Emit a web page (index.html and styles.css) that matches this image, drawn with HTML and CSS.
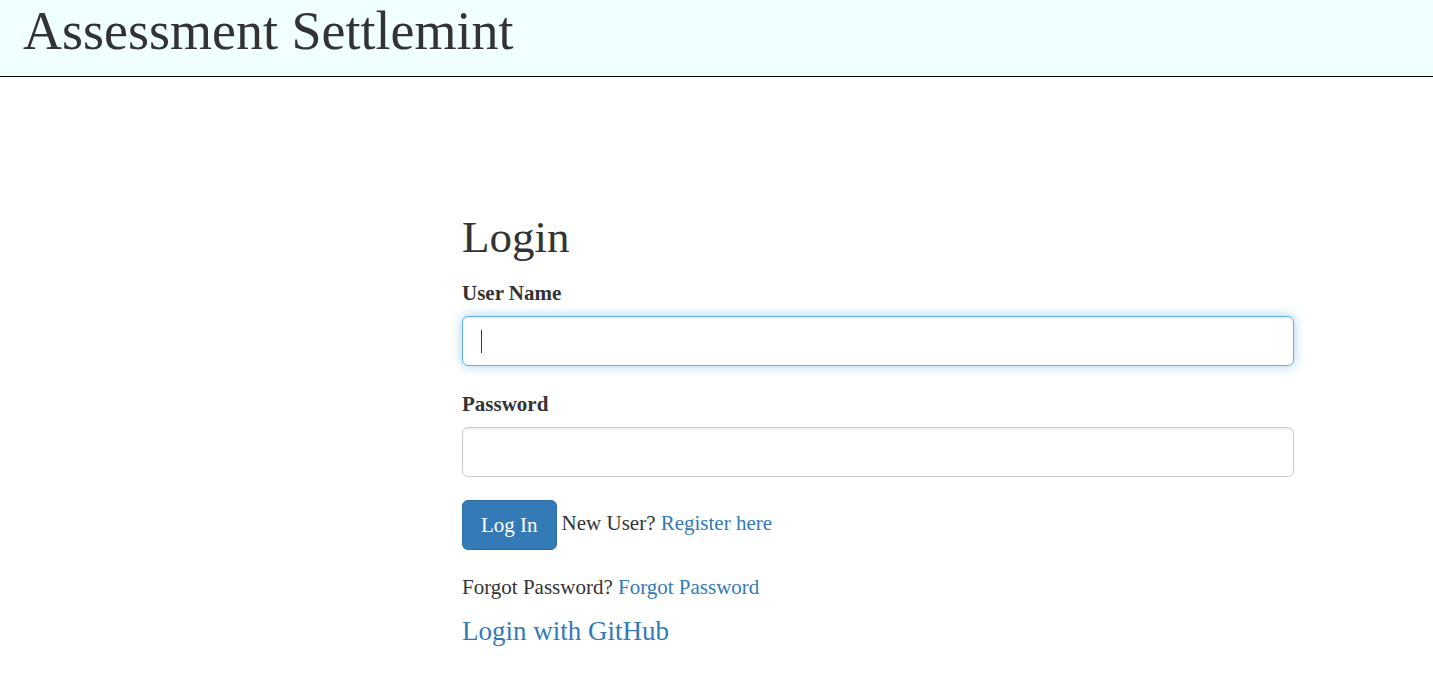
FILE: index.html
```html
<!DOCTYPE html>
<html lang="en">
<head>
<meta charset="utf-8">
<title>Assessment Settlemint</title>
<link rel="stylesheet" href="styles.css">
</head>
<body>
<header class="topbar">
  <h1 class="brand">Assessment Settlemint</h1>
</header>
<main class="page">
  <form class="login-form">
    <h2 class="login-title">Login</h2>
    <div class="form-group">
      <label class="field-label" for="username">User Name</label>
      <div class="input-wrap">
        <input class="field-input is-focused" id="username" type="text">
        <span class="caret"></span>
      </div>
    </div>
    <div class="form-group">
      <label class="field-label" for="password">Password</label>
      <div class="input-wrap">
        <input class="field-input" id="password" type="password">
      </div>
    </div>
    <div class="action-row">
      <button class="btn-primary" type="button">Log In</button>
      <span class="inline-text">New User? <a class="link" href="#">Register here</a></span>
    </div>
    <p class="forgot">Forgot Password? <a class="link" href="#">Forgot Password</a></p>
    <p class="github"><a class="link" href="#">Login with GitHub</a></p>
  </form>
</main>
</body>
</html>
```

FILE: styles.css
```css
* {
  box-sizing: border-box;
}

html, body {
  margin: 0;
  padding: 0;
  background: #fff;
}

body {
  font-family: "Liberation Serif", "Times New Roman", serif;
  font-size: 21px;
  line-height: 30px;
  color: #333;
}

.topbar {
  height: 77px;
  background: #f0ffff;
  border-bottom: 1px solid #000;
  padding: 2px 0 0 23px;
}

.brand {
  margin: 0;
  font-weight: normal;
  font-size: 54px;
  line-height: 59px;
  color: #333;
}

.page {
  padding: 135px 0 0 462px;
}

.login-form {
  width: 832px;
}

.login-title {
  margin: 0 0 16px 0;
  font-weight: normal;
  font-size: 45px;
  line-height: 50px;
  color: #333;
}

.form-group {
  margin-bottom: 23px;
}

.field-label {
  display: block;
  font-weight: bold;
  font-size: 21px;
  line-height: 30px;
  margin-bottom: 8px;
  color: #333;
}

.input-wrap {
  position: relative;
}

.field-input {
  display: block;
  width: 100%;
  height: 50px;
  padding: 9px 18px;
  font-family: inherit;
  font-size: 21px;
  color: #555;
  background: #fff;
  border: 1px solid #ccc;
  border-radius: 6px;
  box-shadow: inset 0 1.5px 1.5px rgba(0, 0, 0, 0.075);
  outline: none;
}

.field-input.is-focused {
  border-color: #66afe9;
  box-shadow: inset 0 1.5px 1.5px rgba(0, 0, 0, 0.075), 0 0 12px rgba(102, 175, 233, 0.6);
}

.caret {
  position: absolute;
  left: 19px;
  top: 14px;
  width: 1px;
  height: 23px;
  background: #333;
}

.action-row {
  display: flex;
  align-items: flex-start;
  gap: 5px;
}

.btn-primary {
  height: 50px;
  padding: 9px 18px;
  font-family: inherit;
  font-size: 21px;
  line-height: 30px;
  color: #fff;
  background: #337ab7;
  border: 1px solid #2e6da4;
  border-radius: 6px;
  cursor: pointer;
}

.inline-text {
  margin-top: 8px;
}

.link {
  color: #337ab7;
  text-decoration: none;
}

.forgot {
  margin: 22px 0 0 0;
}

.github {
  margin: 10px 0 0 0;
  font-size: 27px;
  line-height: 38px;
}
```
